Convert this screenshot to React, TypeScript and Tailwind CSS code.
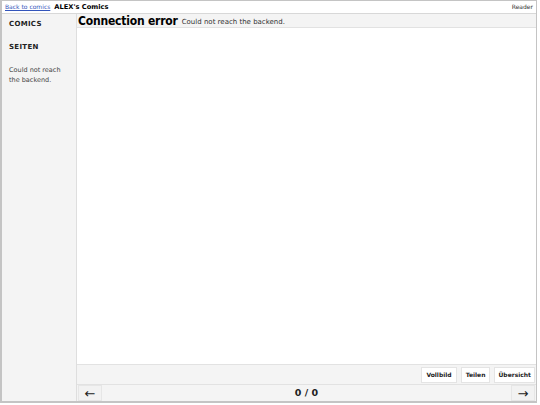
import React from "react";

export default function App() {
  return (
    <div className="w-[540px] h-[405px] bg-white" style={{ fontFamily: '"DejaVu Sans", Verdana, sans-serif' }}>
      <div className="w-[537px] h-[403px] border border-[#c4c4c4] border-b-2 border-l-2 flex flex-col bg-[#f4f4f4]">
        <div className="h-[13px] flex items-center justify-between px-[3px] bg-white border-b border-[#d8d8d8] shrink-0">
          <div className="flex items-center gap-[4px]">
            <a href="#" className="text-[6px] text-[#3355bb] underline leading-none">Back to comics</a>
            <span className="text-[6.7px] font-bold text-black leading-none">ALEX's Comics</span>
          </div>
          <span className="text-[6px] text-[#333] leading-none">Reader</span>
        </div>
        <div className="flex flex-1 min-h-0">
          <div className="w-[75px] shrink-0 border-r border-[#dedede] bg-[#f4f4f4] px-[7px] pt-[7px]">
            <div className="text-[7px] font-bold tracking-[0.3px] text-[#222] leading-none">COMICS</div>
            <div className="text-[7px] font-bold tracking-[0.3px] text-[#222] leading-none mt-[16px]">SEITEN</div>
            <div className="text-[6.5px] text-[#444] leading-[10px] mt-[14px]">Could not reach<br />the backend.</div>
          </div>
          <div className="flex-1 flex flex-col min-w-0">
            <div className="h-[13px] flex items-end gap-[4px] pl-[1px] shrink-0">
              <span className="text-[12px] font-bold text-black leading-none tracking-[-0.2px]" style={{ fontFamily: '"DejaVu Sans Condensed", "DejaVu Sans", sans-serif', fontStretch: "condensed" }}>Connection error</span>
              <span className="text-[7px] text-[#333] leading-none mb-[1px]">Could not reach the backend.</span>
            </div>
            <div className="flex-1 bg-white border-t border-b border-[#e2e2e2]"></div>
            <div className="h-[19px] flex items-center justify-end gap-[4px] pr-[1px] shrink-0">
              <button className="h-[16px] px-[4px] bg-white border border-[#e4e4e4] text-[6px] font-bold text-[#222]">Vollbild</button>
              <button className="h-[16px] px-[4px] bg-white border border-[#e4e4e4] text-[6px] font-bold text-[#222]">Teilen</button>
              <button className="h-[16px] px-[3px] bg-white border border-[#e4e4e4] text-[6px] font-bold text-[#222]">Übersicht</button>
            </div>
            <div className="h-[17px] flex items-center justify-between border-t border-[#e2e2e2] px-[1px] shrink-0">
              <button className="h-[16px] w-[24px] border border-[#e6e6e6] bg-[#f2f2f2] text-[13px] text-[#222] leading-none flex items-center justify-center">←</button>
              <span className="text-[9.5px] font-bold text-[#222] leading-none">0 / 0</span>
              <button className="h-[16px] w-[24px] border border-[#e6e6e6] bg-[#f2f2f2] text-[13px] text-[#222] leading-none flex items-center justify-center">→</button>
            </div>
          </div>
        </div>
      </div>
    </div>
  );
}
